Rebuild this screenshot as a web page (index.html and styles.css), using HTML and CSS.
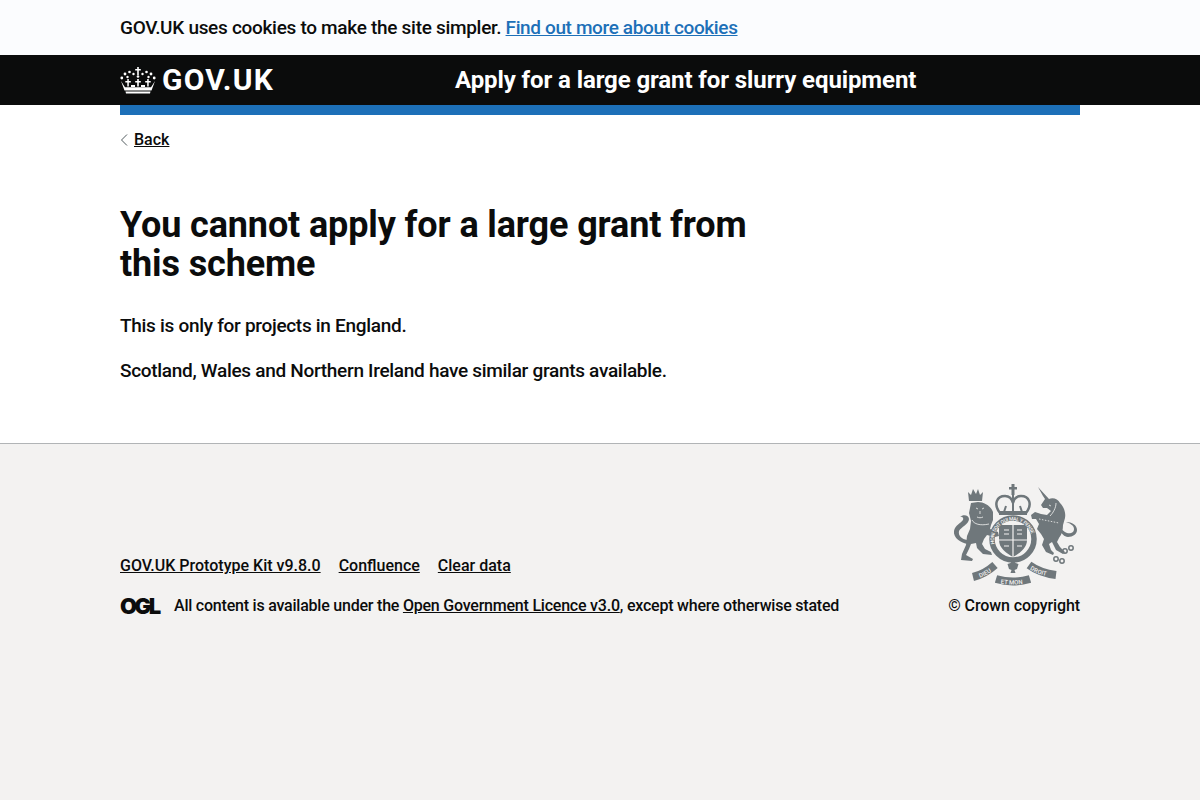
FILE: index.html
```html
<!DOCTYPE html>
<html lang="en">
<head>
  <meta charset="UTF-8">
  <title>You cannot apply for a large grant from this scheme</title>
  <link rel="stylesheet" href="styles.css">
</head>
<body>
  <div class="cookie-banner">
    <p class="container">GOV.UK uses cookies to make the site simpler. <a href="#">Find out more about cookies</a></p>
  </div>
  <header class="header">
    <div class="container header-inner">
      <a class="logo" href="#">
        <svg class="crown" viewBox="0 0 36 28" width="36" height="28" aria-hidden="true">
          <g fill="#fff">
            <path d="M17.200 1h1.600v2h2v1.600h-2V9h-1.600V4.600h-2V3h2z"/>
            <circle cx="18" cy="10.500" r="1.300"/>
            <circle cx="13.500" cy="8" r="1.200"/>
            <circle cx="22.500" cy="8" r="1.200"/>
            <circle cx="9.500" cy="6" r="1.300"/>
            <circle cx="26.500" cy="6" r="1.300"/>
            <circle cx="5" cy="8" r="1.400"/>
            <circle cx="31" cy="8" r="1.400"/>
            <circle cx="1.800" cy="12" r="1.400"/>
            <circle cx="34.200" cy="12" r="1.400"/>
            <circle cx="7.500" cy="11" r="1.200"/>
            <circle cx="28.500" cy="11" r="1.200"/>
            <path d="M7.300 13h1.500v2h2v1.500h-2v4H7.300v-4h-2V15h2z"/>
            <path d="M27.200 13h1.500v2h2v1.500h-2v4h-1.500v-4h-2V15h2z"/>
            <path d="M17.200 13h1.600v2h2v1.500h-2v4h-1.600v-4h-2V15h2z"/>
            <path d="M1 15l4 6.200h26l4-6.200-3.500 9.500h-27z"/>
            <path d="M11 19h4v2h-4zM21 19h4v2h-4z"/>
            <path d="M5.500 25.500h25l-.5 2h-24z"/>
          </g>
        </svg>
        <span class="logo-text">GOV.UK</span>
      </a>
      <a class="service-name" href="#">Apply for a large grant for slurry equipment</a>
    </div>
  </header>
  <div class="container">
    <div class="header-rule"></div>
    <a class="back-link" href="#">
      <svg viewBox="0 0 8 12" width="8" height="12" aria-hidden="true"><path d="M7 .5L1.500 6 7 11.500" fill="none" stroke="#505a5f" stroke-width="1"/></svg>
      <span>Back</span>
    </a>
    <main class="main">
      <h1>You cannot apply for a large grant from this scheme</h1>
      <p>This is only for projects in England.</p>
      <p>Scotland, Wales and Northern Ireland have similar grants available.</p>
    </main>
  </div>
  <footer class="footer">
    <div class="container footer-inner">
      <div class="footer-meta">
        <ul class="footer-links">
          <li><a href="#">GOV.UK Prototype Kit v9.8.0</a></li>
          <li><a href="#">Confluence</a></li>
          <li><a href="#">Clear data</a></li>
        </ul>
        <div class="licence">
          <span class="ogl">OGL</span>
          <span>All content is available under the <a href="#">Open Government Licence v3.0</a>, except where otherwise stated</span>
        </div>
      </div>
      <div class="copyright">
        <svg class="crest" viewBox="0 0 126 102" width="126" height="102" aria-hidden="true">
          <defs>
            <path id="garter-arc" d="M41 62A21 21 0 1 1 81 62"/>
            <path id="ribbon-left" d="M24 92Q34 89 43 81"/>
            <path id="ribbon-mid" d="M46 96Q61 99 76 96"/>
            <path id="ribbon-right" d="M77 81Q87 89 102 90"/>
          </defs>
          <g fill="#6f777b">
            <!-- lion -->
            <path d="M17 17l-1-9 3 3 2-6 3 5 2-5 2 6 3-3-1 9z"/>
            <path d="M19 19l7-1c6 0 13 4 15 10l0 8-2 5-1 4 8 3 1 4-4 1-8-2-3 4-2 5 3 5 6 3 1 3-9-1-6-6-1-5-5 1-2 5-3 6 7 4-1 2-11-1 1-6 4-9 1-9 3-7 1-8-2-8z"/>
            <path d="M16 60C9 59 1 54 2 47c1-6 7-8 9-11 1-2-1-4-3-3 3-3 9-2 9 2 0 5-8 8-10 12-1 5 3 8 8 9z"/>
            <!-- unicorn -->
            <path d="M86 3l11 12c4-2 9 0 11 4 4 4 6 10 5 15l-2 7c0 5-1 9-4 13l-2 4 3 5 5 5-2 2-7-4-4-8-3 2 2 6 3 3-1 2-7-3-4-7 2-6-3-5-4-5 2-5-3-5-4 0-1-4 4-3 6 2 6 1 4-4-4-3-4 0-2-3 4-6-2-3z"/>
            <path d="M107 47c3 2 5 6 9 6 5 0 9-3 9-7 0-5-5-8-11-8 3 1 8 3 8 7 0 4-4 5-7 4-3-1-5-4-8-5z"/>
          </g>
          <g fill="none" stroke="#f3f2f1" stroke-width=".8">
            <path d="M24 24l2 1M32 24l-2 1M28 27v3M25 33c2 1 4 1 6 0"/>
            <path d="M20 36c2 4 8 6 17 4"/>
            <path d="M97 21l2 1M98 32c3-3 6-8 6-13"/>
            <path d="M87 35l5 1 5 1 5 1 5 1" stroke-dasharray="1.500 1.500"/>
          </g>
          <g fill="none" stroke="#6f777b" stroke-width="1.500">
            <circle cx="104" cy="75" r="2.200"/>
            <circle cx="110" cy="77" r="2.200"/>
            <circle cx="113" cy="67" r="2.200"/>
            <circle cx="119" cy="64" r="2.200"/>
            <!-- royal crown -->
            <path stroke-width="2.500" d="M48 29C41 20 45 12 53 12c4 0 7 3 8 7 1-4 4-7 8-7 8 0 12 8 5 17"/>
            <path stroke-width="2" d="M61 10v18M54 22l-2 6M68 22l2 6"/>
            <!-- garter ring -->
            <circle cx="61" cy="55" r="21" stroke-width="5.500"/>
          </g>
          <g fill="#6f777b">
            <path d="M59.500 0h3v3h2.500v2.500h-2.500V11h-3V5.500H57V3h2.500z"/>
            <path d="M47 27h28v4H47z"/>
            <path d="M47 41h28v15c0 8-7 13-14 17-7-4-14-9-14-17z"/>
            <path d="M61 76l2.500 3 3 1-1.500 5-2.500 1 1 3h-5l1-3-2.500-1-1.500-5 3-1z"/>
          </g>
          <path d="M61 41v32M47 56h28M52 46h5M65 46h5M52 62h5M65 62h5M52 50h5M65 50h5" stroke="#f3f2f1" stroke-width="1.200"/>
          <g fill="none" stroke="#6f777b" stroke-width="8">
            <path d="M21 93Q33 90 43 81"/>
            <path d="M44 95Q61 100 78 95"/>
            <path d="M77 81Q88 89 104 91"/>
          </g>
          <text class="crest-text garter-text"><textPath href="#garter-arc" startOffset="2">HONI SOIT QUI MAL Y PENSE</textPath></text>
          <text class="crest-text"><textPath href="#ribbon-left" startOffset="3">DIEU</textPath></text>
          <text class="crest-text"><textPath href="#ribbon-mid" startOffset="3">ET MON</textPath></text>
          <text class="crest-text"><textPath href="#ribbon-right" startOffset="3">DROIT</textPath></text>
        </svg>
        <a href="#" class="crown-link">© Crown copyright</a>
      </div>
    </div>
  </footer>
</body>
</html>
```

FILE: styles.css
```css
body {
  font-family: Roboto, Arial, sans-serif;
  font-weight: 500;
  color: #0b0c0c;
  margin: 0;
  min-height: 800px;
  display: flex;
  flex-direction: column;
}
a {
  color: inherit;
}
p {
  margin: 0;
}
.container {
  width: 960px;
  margin: 0 auto;
}
.cookie-banner {
  background: #fbfcfe;
  height: 55px;
  font-size: 19px;
  line-height: 55px;
  letter-spacing: -0.3px;
}
.cookie-banner a {
  color: #1d70b8;
  letter-spacing: -0.37px;
}
.header {
  background: #0b0c0c;
  height: 50px;
}
.header-inner {
  display: flex;
  align-items: center;
  height: 50px;
}
.logo {
  display: flex;
  align-items: center;
  gap: 6px;
  width: 335px;
  color: white;
  text-decoration: none;
}
.logo-text {
  font-size: 30px;
  font-weight: 700;
  line-height: 50px;
  letter-spacing: 1.2px;
}
.service-name {
  color: white;
  font-size: 24px;
  font-weight: 700;
  letter-spacing: -0.1px;
  text-decoration: none;
}
.header-rule {
  height: 10px;
  background: #1d70b8;
}
.back-link {
  display: inline-flex;
  align-items: center;
  gap: 6px;
  margin-top: 15px;
  font-size: 16px;
  line-height: 20px;
}
.main {
  padding-top: 56px;
  padding-bottom: 40px;
}
h1 {
  width: 640px;
  margin: 0 0 29px;
  font-size: 36px;
  line-height: 39px;
  font-weight: 700;
  letter-spacing: -0.13px;
}
.main p {
  font-size: 19px;
  line-height: 25px;
  margin-bottom: 20px;
  letter-spacing: -0.3px;
}
.footer {
  flex: 1;
  background: #f3f2f1;
  border-top: 1px solid #b1b4b6;
  font-size: 16px;
}
.footer-inner {
  display: flex;
  justify-content: space-between;
  align-items: flex-end;
  padding-top: 40px;
}
.footer-links {
  display: flex;
  gap: 18px;
  list-style: none;
  margin: 0 0 21px;
  padding: 0;
}
.licence {
  display: flex;
  align-items: center;
  gap: 13px;
  line-height: 20px;
  letter-spacing: -0.22px;
}
.ogl {
  font-family: Inter, sans-serif;
  font-size: 22px;
  font-weight: 900;
  letter-spacing: -2.5px;
  width: 41px;
}
.copyright {
  display: flex;
  flex-direction: column;
  align-items: flex-end;
  gap: 10px;
  line-height: 20px;
  letter-spacing: -0.1px;
}
.crest {
  display: block;
  margin-right: 2px;
}
.crest-text {
  font-size: 6px;
  fill: #f3f2f1;
  dominant-baseline: central;
}
.garter-text {
  font-size: 5px;
}
.crown-link {
  text-decoration: none;
}
```
